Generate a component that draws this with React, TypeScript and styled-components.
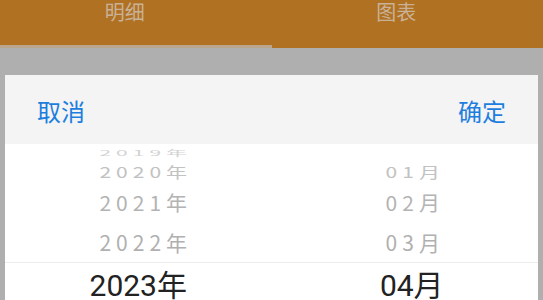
import { createGlobalStyle, styled } from "styled-components";

const GlobalStyle = createGlobalStyle`
  html, body {
    margin: 0;
    padding: 0;
    height: 300px;
    overflow: hidden;
    background: #afafaf;
    font-family: "Noto Sans CJK SC", "Noto Sans", sans-serif;
  }
`;

type WheelItem = {
  label: string;
  height: number;
  scale: number;
  color: string;
};

const years: WheelItem[] = [
  { label: "2019年", height: 16, scale: 0.38, color: "#d2d2d2" },
  { label: "2020年", height: 22, scale: 0.72, color: "#c2c2c2" },
  { label: "2021年", height: 40, scale: 0.95, color: "#b3b3b3" },
  { label: "2022年", height: 40, scale: 1, color: "#b0b0b0" },
];

const months: WheelItem[] = [
  { label: "", height: 16, scale: 0.38, color: "#d2d2d2" },
  { label: "01月", height: 22, scale: 0.72, color: "#c2c2c2" },
  { label: "02月", height: 40, scale: 0.95, color: "#b3b3b3" },
  { label: "03月", height: 40, scale: 1, color: "#b0b0b0" },
];

const App = () => {
  return (
    <>
      <GlobalStyle />
      <Page>
        <TabBar>
          <Tab $active>明细</Tab>
          <Tab>图表</Tab>
        </TabBar>
        <Sheet>
          <SheetHeader>
            <HeaderButton>取消</HeaderButton>
            <HeaderButton>确定</HeaderButton>
          </SheetHeader>
          <WheelBody>
            <Column>
              {years.map((item) => (
                <Slot key={item.label} $height={item.height} $shift={10}>
                  <Faded $scale={item.scale} $color={item.color}>
                    {item.label}
                  </Faded>
                </Slot>
              ))}
              <Selected $shift={0}>2023年</Selected>
            </Column>
            <Column>
              {months.map((item, i) => (
                <Slot key={i} $height={item.height} $shift={16}>
                  <Faded $scale={item.scale} $color={item.color}>
                    {item.label}
                  </Faded>
                </Slot>
              ))}
              <Selected $shift={14}>04月</Selected>
            </Column>
          </WheelBody>
        </Sheet>
      </Page>
    </>
  );
};

export default App;

const Page = styled.div`
  width: 543px;
  height: 300px;
  display: flex;
  flex-direction: column;
  overflow: hidden;
`;

const TabBar = styled.div`
  display: flex;
  height: 48px;
  background: #b07222;
  flex-shrink: 0;
`;

const Tab = styled.div<{ $active?: boolean }>`
  flex: 1;
  box-sizing: border-box;
  padding-right: 22px;
  text-align: center;
  font-size: 20px;
  line-height: 24px;
  color: #c9b197;
  border-bottom: 3px solid ${(p) => (p.$active ? "#baa68e" : "transparent")};
`;

const Sheet = styled.div`
  margin: 27px 5px 0;
  display: flex;
  flex-direction: column;
  background: #ffffff;
  flex: 1;
  overflow: hidden;
`;

const SheetHeader = styled.div`
  height: 69px;
  flex-shrink: 0;
  display: flex;
  align-items: center;
  justify-content: space-between;
  padding: 0 32px;
  background: #f4f4f4;
`;

const HeaderButton = styled.span`
  font-size: 24px;
  color: #1d7ede;
  line-height: 1;
  padding-top: 2px;
`;

const WheelBody = styled.div`
  display: flex;
  flex: 1;
`;

const Column = styled.div`
  flex: 1;
  display: flex;
  flex-direction: column;
`;

const Slot = styled.div<{ $height: number; $shift: number }>`
  height: ${(p) => p.$height}px;
  display: flex;
  align-items: center;
  justify-content: center;
  padding-left: ${(p) => p.$shift}px;
`;

const Faded = styled.span<{ $scale: number; $color: string }>`
  font-size: 21px;
  line-height: 1;
  letter-spacing: 5px;
  padding-left: 5px;
  color: ${(p) => p.$color};
  transform: scaleY(${(p) => p.$scale});
  white-space: nowrap;
`;

const Selected = styled.div<{ $shift: number }>`
  border-top: 1px solid #ececec;
  height: 44px;
  box-sizing: border-box;
  padding-bottom: 4px;
  display: flex;
  align-items: center;
  justify-content: center;
  padding-left: ${(p) => p.$shift}px;
  font-family: Roboto, "Noto Sans CJK SC", sans-serif;
  font-size: 30px;
  color: #222222;
`;
